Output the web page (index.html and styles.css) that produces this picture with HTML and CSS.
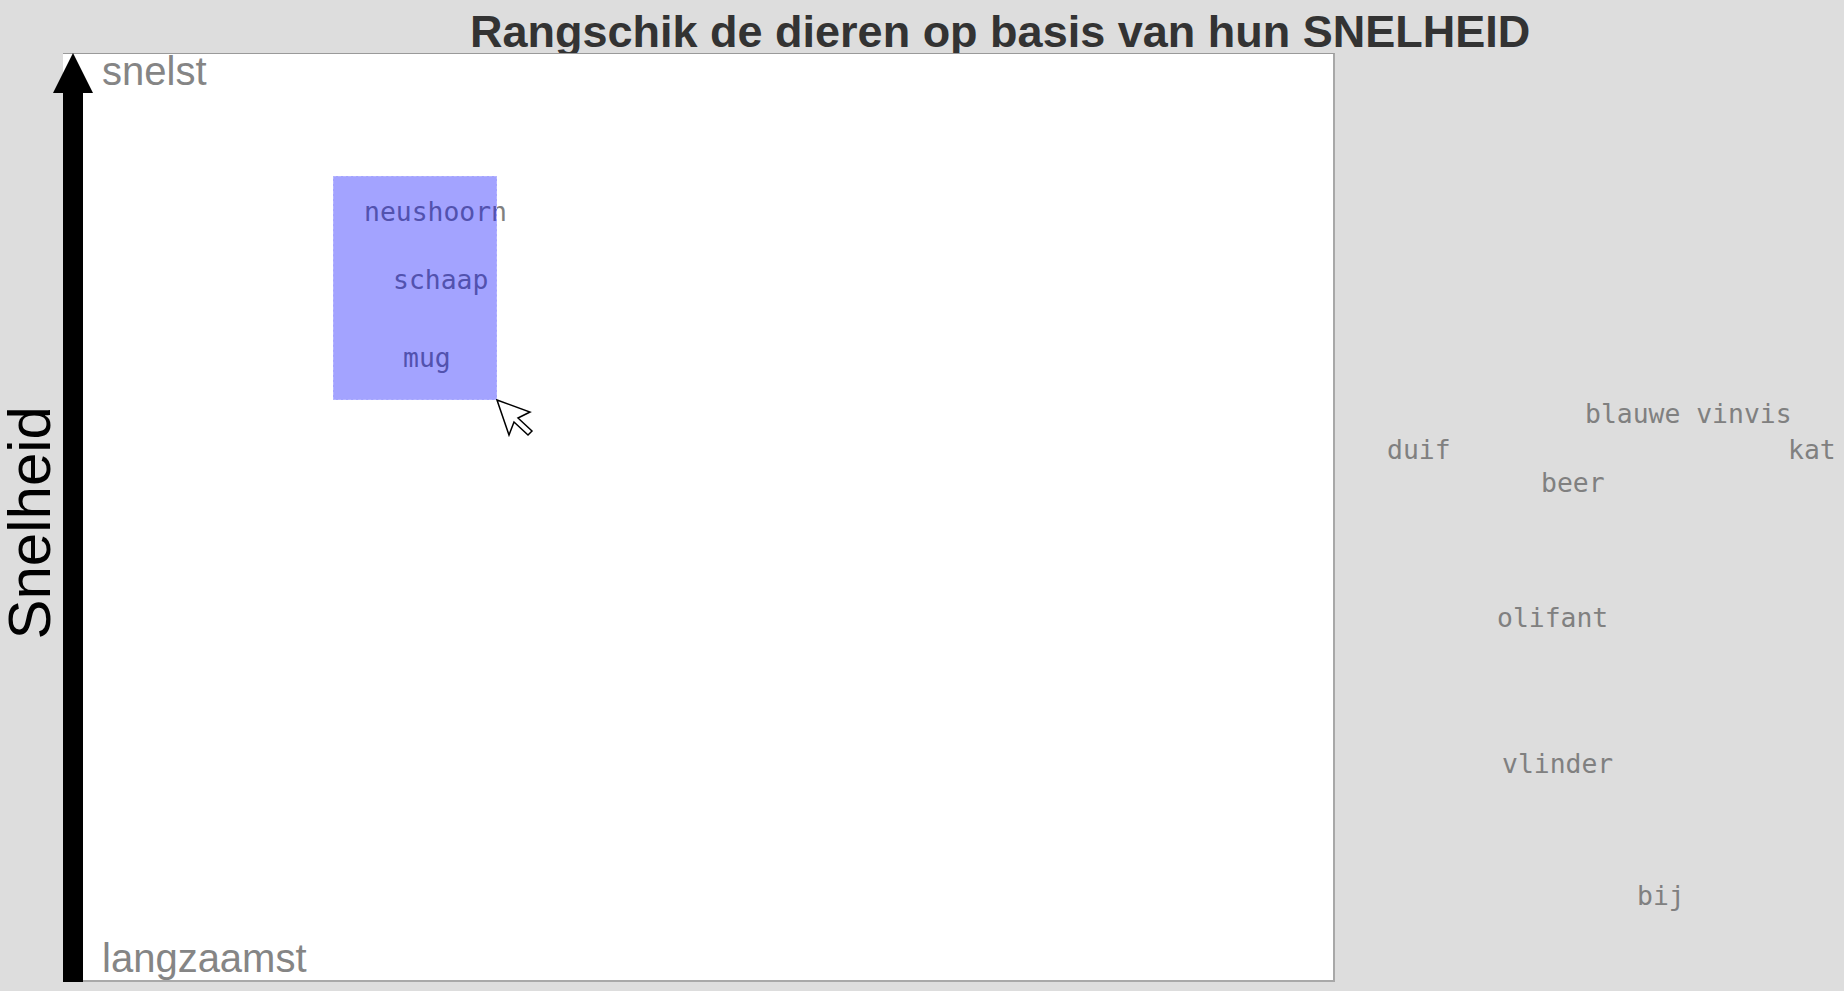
FILE: index.html
```html
<!DOCTYPE html>
<html lang="nl">
<head>
<meta charset="utf-8">
<title>Rangschik de dieren</title>
<link rel="stylesheet" href="styles.css">
</head>
<body>
<h1 class="title">Rangschik de dieren op basis van hun SNELHEID</h1>
<div class="main">
  <div class="ylabel"><span class="ylabel-text">Snelheid</span></div>
  <div class="panel">
    <div class="axis">
      <div class="axis-head"></div>
      <div class="axis-bar"></div>
    </div>
    <div class="scale">
      <span class="scale-label scale-top">snelst</span>
      <span class="scale-label">langzaamst</span>
    </div>
    <span class="word" style="left:301px;top:143px">neushoorn</span>
    <span class="word" style="left:330px;top:211px">schaap</span>
    <span class="word" style="left:340px;top:289px">mug</span>
    <div class="selection"></div>
    <svg class="cursor" width="40" height="40" viewBox="-1 -1 40 40">
      <polygon points="0,0 33,12 21,18 35,31 31,35 17,22 12,35" fill="#fff" stroke="#000" stroke-width="1.5" stroke-linejoin="miter"/>
    </svg>
  </div>
  <div class="pool">
    <span class="word" style="left:250px;top:346px">blauwe vinvis</span>
    <span class="word" style="left:52px;top:382px">duif</span>
    <span class="word" style="left:453px;top:382px">kat</span>
    <span class="word" style="left:206px;top:415px">beer</span>
    <span class="word" style="left:162px;top:550px">olifant</span>
    <span class="word" style="left:167px;top:696px">vlinder</span>
    <span class="word" style="left:302px;top:828px">bij</span>
  </div>
</div>
</body>
</html>
```
FILE: styles.css
```css
html, body {
  margin: 0;
  padding: 0;
}
body {
  width: 1844px;
  height: 991px;
  background: #dddddd;
  font-family: "Liberation Sans", Arial, sans-serif;
  overflow: hidden;
}
.title {
  margin: 0;
  height: 53px;
  box-sizing: border-box;
  padding: 10px 0 0 470px;
  font-size: 45px;
  line-height: 43px;
  font-weight: bold;
  color: #333333;
  white-space: nowrap;
}
.main {
  display: flex;
  height: 929px;
}
.ylabel {
  width: 60px;
  margin-right: 3px;
  flex: none;
  display: flex;
  align-items: center;
  justify-content: center;
  padding-top: 10px;
  box-sizing: border-box;
}
.ylabel-text {
  flex: none;
  font-size: 60px;
  line-height: 60px;
  color: #000;
  white-space: nowrap;
  writing-mode: vertical-rl;
  text-orientation: sideways;
  transform: rotate(180deg);
}
.panel {
  position: relative;
  flex: none;
  width: 1272px;
  box-sizing: border-box;
  background: #ffffff;
  border-top: 1px solid #9a9a9a;
  border-right: 2px solid #a8a8a8;
  border-bottom: 2px solid #a8a8a8;
  display: flex;
}
.axis {
  width: 20px;
  flex: none;
  display: flex;
  flex-direction: column;
  align-items: center;
  margin-top: -1px;
  margin-bottom: -2px;
}
.axis-head {
  width: 0;
  height: 0;
  border-left: 20px solid transparent;
  border-right: 20px solid transparent;
  border-bottom: 40px solid #000;
  flex: none;
}
.axis-bar {
  width: 20px;
  flex: 1;
  background: #000;
}
.scale {
  display: flex;
  flex-direction: column;
  justify-content: space-between;
  padding: 0 0 3px 19px;
}
.scale-label {
  font-size: 40px;
  line-height: 38px;
  color: #858585;
}
.scale-top {
  margin-top: -2px;
}
.word {
  position: absolute;
  font-family: "DejaVu Sans Mono", monospace;
  font-size: 26.4px;
  line-height: 30px;
  color: #808080;
  white-space: nowrap;
}
.selection {
  position: absolute;
  left: 270px;
  top: 122px;
  width: 164px;
  height: 224px;
  box-sizing: border-box;
  background: rgba(0, 0, 255, 0.36);
  border: 1px dashed #b6b6ff;
}
.cursor {
  position: absolute;
  left: 433px;
  top: 345px;
}
.pool {
  position: relative;
  flex: 1;
}
```
